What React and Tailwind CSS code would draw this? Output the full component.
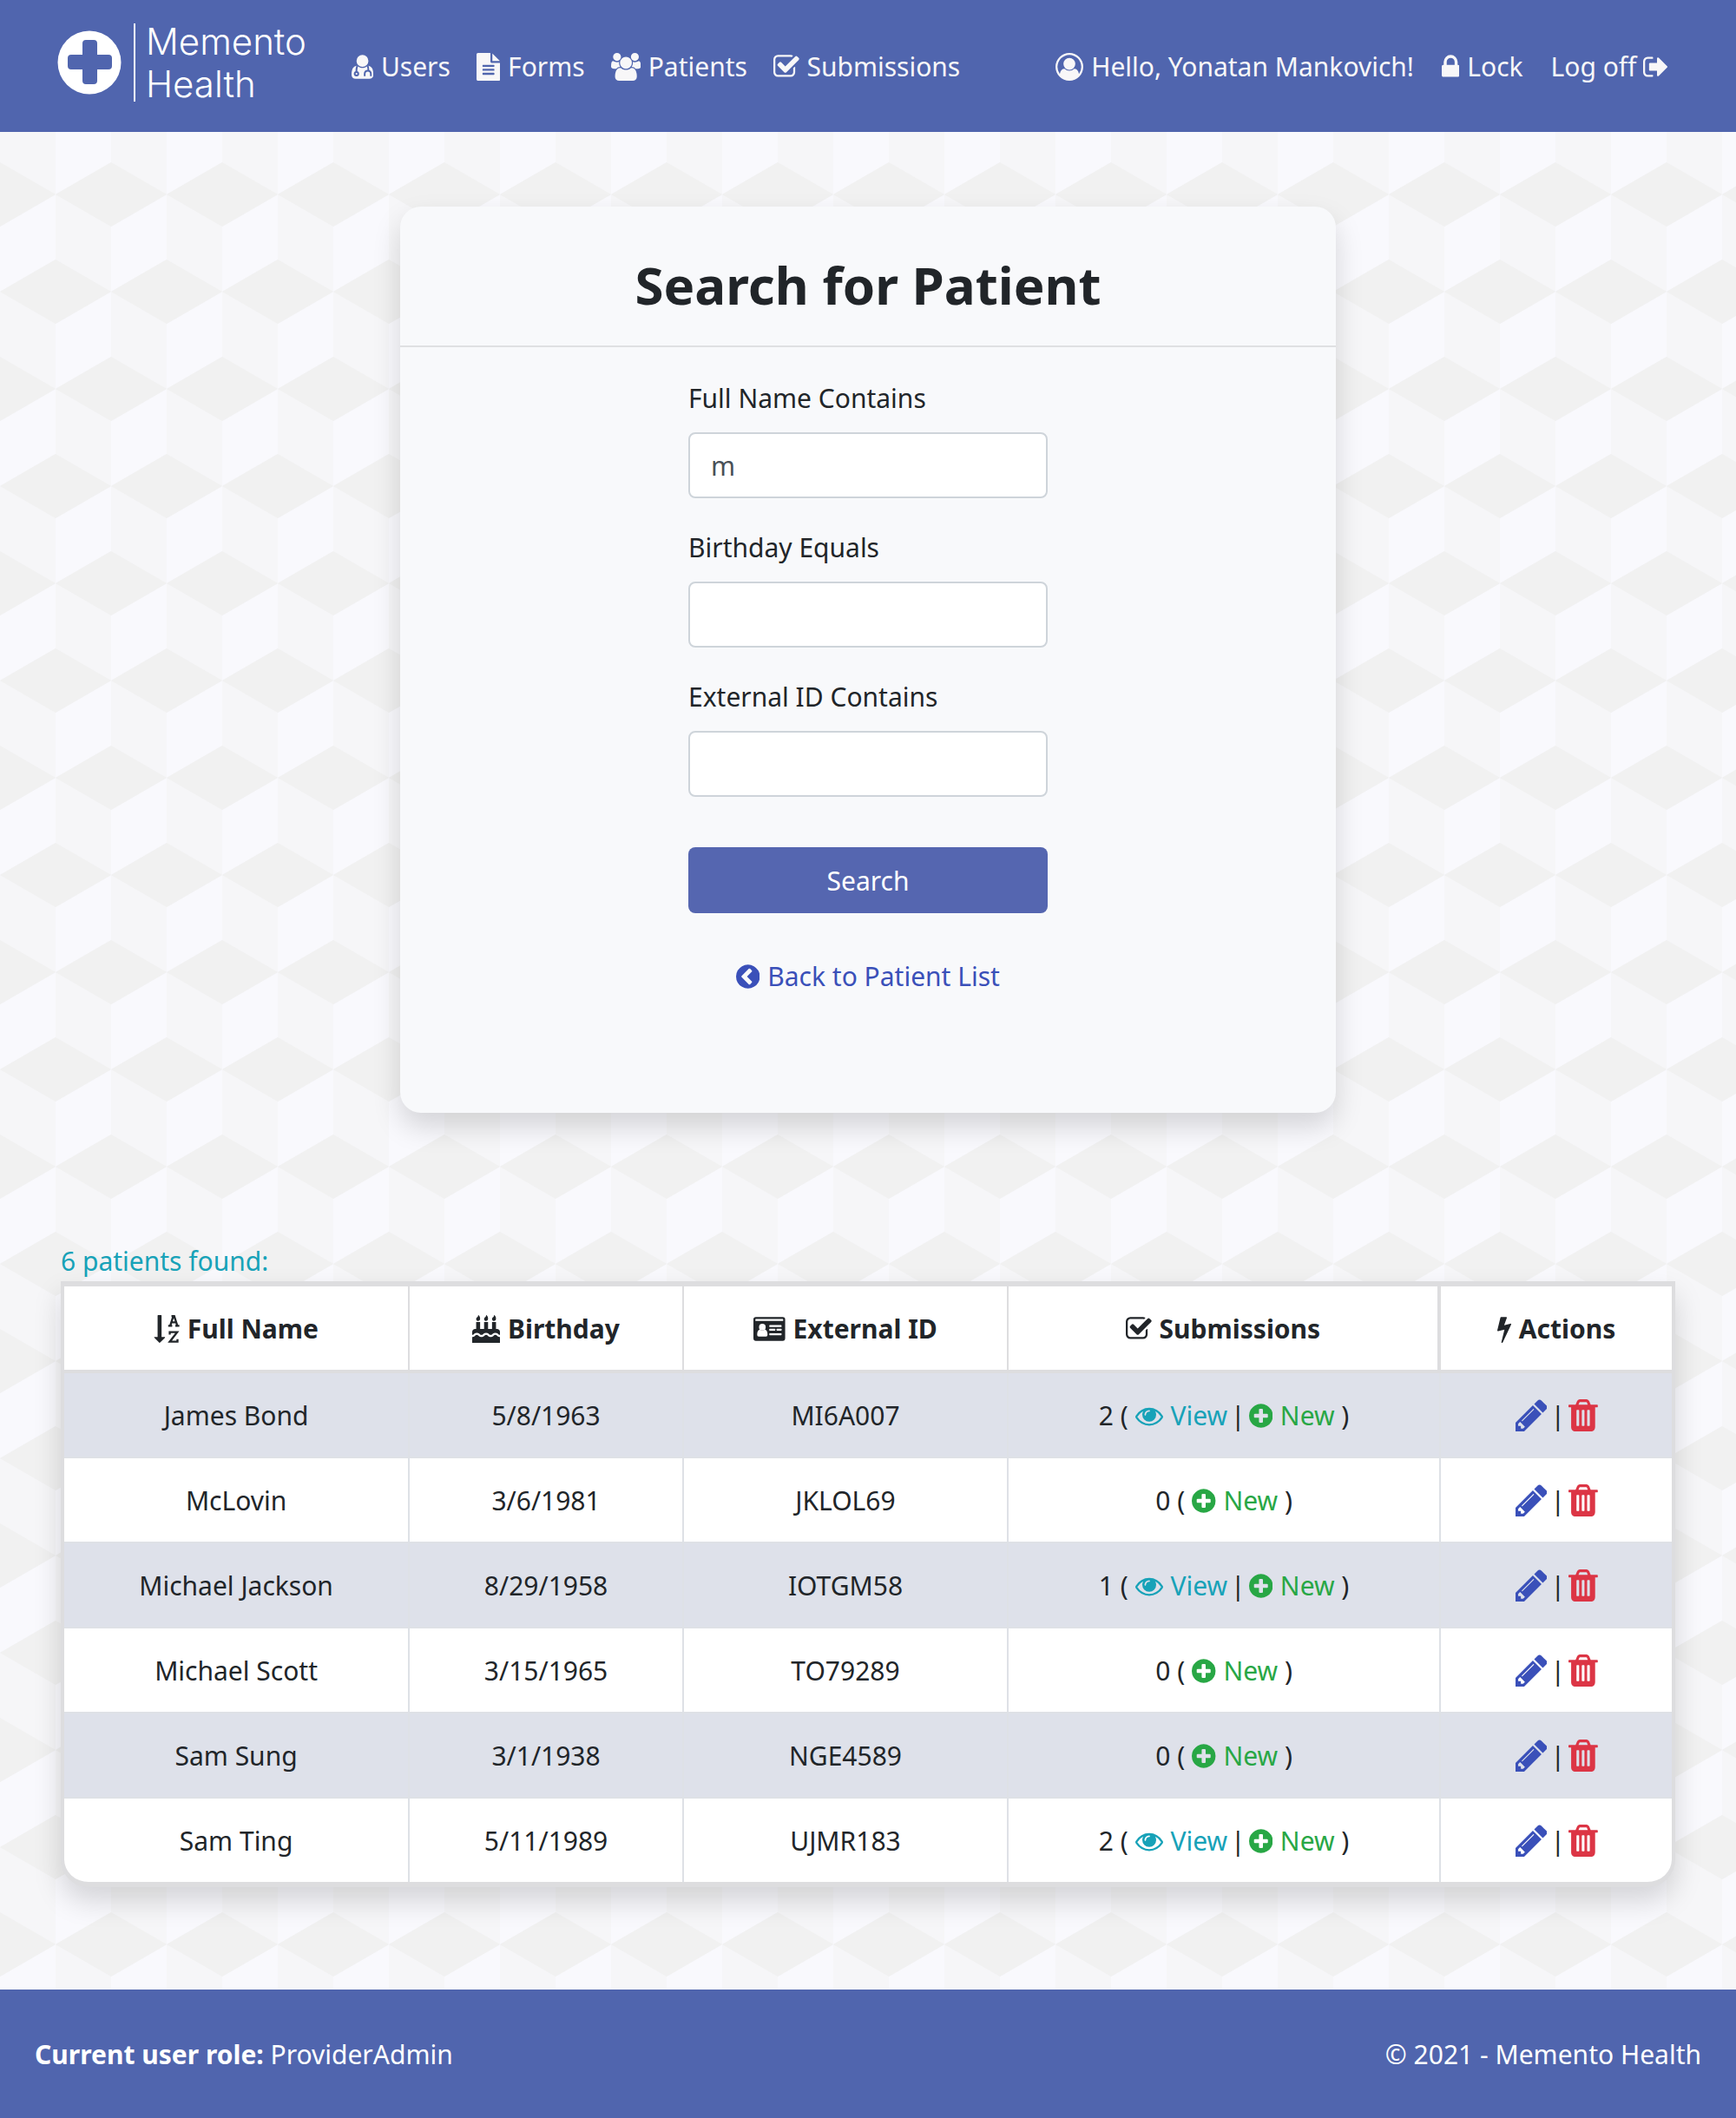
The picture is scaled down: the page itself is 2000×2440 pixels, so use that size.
const CIRCLE =
  "m627 -499q0 209-103 385.5t-279.5 279.5-385.5 103-385.5-103-279.5-279.5-103-385.5 103-385.5 279.5-279.5 385.5-103 385.5 103 279.5 279.5 103 385.5z";
const FLAME =
  "q0 77-36 118.5t-92 41.5q-53 0-90.5-37.5t-37.5-90.5q0-29 9.5-51t23.5-34 31-28 31-31.5 23.5-44.5 9.5-67q38 0 83 74t45 150z";
const TRASH_BAR = "v-704q0-14-9-23t-23-9h-64q-14 0-23 9t-9 23v704q0 14 9 23t23 9h64q14 0 23-9t9-23z";
const TEXT_LINE = "v-64q0-14-9-23t-23-9h-704q-14 0-23 9t-9 23v64q0 14 9 23t23 9h704q14 0 23-9t9-23z";

function Icon({ box, d, children, className = "mr-px h-8 align-[-5px]" }) {
  return (
    <svg viewBox={box} fill="currentColor" aria-hidden="true" className={"inline-block w-auto " + className}>
      {d ? <path d={d} /> : children}
    </svg>
  );
}

const UserMd = () => (
  <Icon box="192 0 1408 1792">
    <path d="M1600 1405q0 120-73 189.5t-194 69.5h-874q-121 0-194-69.5t-73-189.5q0-53 3.5-103.5t14-109 26.5-108.5 43-97.5 62-81 85.5-53.5 111.5-20q9 0 42 21.5t74.5 48 108 48 133.5 21.5 133.5-21.5 108-48 74.5-48 42-21.5q61 0 111.5 20t85.5 53.5 62 81 43 97.5 26.5 108.5 14 109 3.5 103.5zm-320-893q0 159-112.5 271.5t-271.5 112.5-271.5-112.5-112.5-271.5 112.5-271.5 271.5-112.5 271.5 112.5 112.5 271.5z" />
    <g fill="none" stroke="#5065ae" strokeWidth="110">
      <path d="M560 840q-56 130-56 390" />
      <circle cx="512" cy="1344" r="116" />
      <path d="M1240 840q36 120 40 300" />
      <path d="M1040 1500v-140q0-210 200-210t200 210v140" />
    </g>
  </Icon>
);
const FileText = () => (
  <Icon
    box="128 0 1536 1792"
    d={
      "M1596 476q14 14 28 36h-472v-472q22 14 36 28zm-476 164h544v1056q0 40-28 68t-68 28h-1344q-40 0-68-28t-28-68v-1600q0-40 28-68t68-28h800v544q0 40 28 68t68 28zm160 736" +
      TEXT_LINE + "m0-256" + TEXT_LINE + "m0-256" + TEXT_LINE
    }
  />
);
const Users = () => (
  <Icon
    box="0 0 1920 1792"
    d="M593 896q-162 5-265 128h-134q-82 0-138-40.5t-56-118.5q0-353 124-353 6 0 43.5 21t97.5 42.5 119 21.5q67 0 133-23-5 37-5 66 0 139 81 256zm1071 637q0 120-73 189.5t-194 69.5h-874q-121 0-194-69.5t-73-189.5q0-53 3.5-103.5t14-109 26.5-108.5 43-97.5 62-81 85.5-53.5 111.5-20q10 0 43 21.5t73 48 107 48 135 21.5 135-21.5 107-48 73-48 43-21.5q61 0 111.5 20t85.5 53.5 62 81 43 97.5 26.5 108.5 14 109 3.5 103.5zm-1024-1277q0 106-75 181t-181 75-181-75-75-181 75-181 181-75 181 75 75 181zm704 384q0 159-112.5 271.5t-271.5 112.5-271.5-112.5-112.5-271.5 112.5-271.5 271.5-112.5 271.5 112.5 112.5 271.5zm576 225q0 78-56 118.5t-138 40.5h-134q-103-123-265-128 81-117 81-256 0-29-5-66 66 23 133 23 59 0 119-21.5t97.5-42.5 43.5-21q124 0 124 353zm-128-609q0 106-75 181t-181 75-181-75-75-181 75-181 181-75 181 75 75 181z"
  />
);
const CheckSquare = () => (
  <Icon
    box="64 0 1664 1792"
    d="M1472 930v318q0 119-84.5 203.5t-203.5 84.5h-832q-119 0-203.5-84.5t-84.5-203.5v-832q0-119 84.5-203.5t203.5-84.5h832q63 0 117 25 15 7 18 23 3 17-9 29l-49 49q-10 10-23 10-3 0-9-2-23-6-45-6h-832q-66 0-113 47t-47 113v832q0 66 47 113t113 47h832q66 0 113-47t47-113v-254q0-13 9-22l64-64q10-10 23-10 6 0 12 3 20 8 20 29zm231-489l-814 814q-24 24-57 24t-57-24l-430-430q-24-24-24-57t24-57l110-110q24-24 57-24t57 24l263 263 647-647q24-24 57-24t57 24l110 110q24 24 24 57t-24 57z"
  />
);
const UserCircle = () => (
  <Icon
    box="0 0 1792 1792"
    d="M896 0q182 0 348 71t286 191 191 286 71 348q0 181-70.5 347t-190.5 286-286 191.5-349 71.5-349-71-285.5-191.5-190.5-286-71-347.5 71-348 191-286 286-191 348-71zm619 1351q149-205 149-455 0-156-61-298t-164-245-245-164-298-61-298 61-245 164-164 245-61 298q0 250 149 455 66-327 306-327 131 128 313 128t313-128q240 0 306 327zm-235-647q0-159-112.5-271.5t-271.5-112.5-271.5 112.5-112.5 271.5 112.5 271.5 271.5 112.5 271.5-112.5 112.5-271.5z"
  />
);
const Lock = () => (
  <Icon
    box="320 0 1152 1792"
    d="M640 768h512v-192q0-106-75-181t-181-75-181 75-75 181v192zm832 96v576q0 40-28 68t-68 28h-960q-40 0-68-28t-28-68v-576q0-40 28-68t68-28h32v-192q0-184 132-316t316-132 316 132 132 316v192h32q40 0 68 28t28 68z"
  />
);
const SignOut = () => (
  <Icon
    box="64 0 1664 1792"
    d="M704 1440q0 4 1 20t.5 26.5-3 23.5-10 19.5-20.5 6.5h-320q-119 0-203.5-84.5t-84.5-203.5v-704q0-119 84.5-203.5t203.5-84.5h320q13 0 22.5 9.5t9.5 22.5q0 4 1 20t.5 26.5-3 23.5-10 19.5-20.5 6.5h-320q-66 0-113 47t-47 113v704q0 66 47 113t113 47h312l11.5 1 11.5 3 8 5.5 7 9 2 13.5zm928-544q0 26-19 45l-544 544q-19 19-45 19t-45-19-19-45v-288h-448q-26 0-45-19t-19-45v-384q0-26 19-45t45-19h448v-288q0-26 19-45t45-19 45 19l544 544q19 19 19 45z"
  />
);
const ChevronCircle = () => (
  <Icon
    box="128 0 1536 1792"
    d={
      "M1037 1395l102-102q19-19 19-45t-19-45l-307-307 307-307q19-19 19-45t-19-45l-102-102q-19-19-45-19t-45 19l-454 454q-19 19-19 45t19 45l454 454q19 19 45 19t45-19z" +
      CIRCLE
    }
  />
);
const PlusCircle = () => (
  <Icon
    box="128 0 1536 1792"
    d="M1344 960v-128q0-26-19-45t-45-19h-256v-256q0-26-19-45t-45-19h-128q-26 0-45 19t-19 45v256h-256q-26 0-45 19t-19 45v128q0 26 19 45t45 19h256v256q0 26 19 45t45 19h128q26 0 45-19t19-45v-256h256q26 0 45-19t19-45zm320-64q0 209-103 385.5t-279.5 279.5-385.5 103-385.5-103-279.5-279.5-103-385.5 103-385.5 279.5-279.5 385.5-103 385.5 103 279.5 279.5 103 385.5z"
  />
);
const Eye = () => (
  <Icon
    box="0 0 1792 1792"
    d="M1664 960q-152-236-381-353 61 104 61 225 0 185-131.5 316.5t-316.5 131.5-316.5-131.5-131.5-316.5q0-121 61-225-229 117-381 353 133 205 333.5 326.5t434.5 121.5 434.5-121.5 333.5-326.5zm-720-384q0-20-14-34t-34-14q-125 0-214.5 89.5t-89.5 214.5q0 20 14 34t34 14 34-14 14-34q0-86 61-147t147-61q20 0 34-14t14-34zm848 384q0 34-20 69-140 230-376.5 368.5t-499.5 138.5-499.5-139-376.5-368q-20-35-20-69t20-69q140-229 376.5-368t499.5-139 499.5 139 376.5 368q20 35 20 69z"
  />
);
const Bolt = () => (
  <Icon
    box="448 0 896 1792"
    d="M1333 566q18 20 7 44l-540 1157q-13 25-42 25-4 0-14-2-17-5-25.5-19t-4.5-30l197-808-406 101q-4 1-12 1-18 0-31-11-18-15-13-39l201-825q4-14 16-23t28-9h328q19 0 32 12.5t13 29.5q0 8-5 18l-171 463 396-98q8-2 12-2 19 0 34 15z"
  />
);
const Cake = () => (
  <Icon
    box="0 0 1792 1792"
    d={
      "M1792 1408v384h-1792v-384q45 0 85-14t59-27.5 47-37.5q30-27 51.5-38t56.5-11q24 0 44 7t31 15 33 27q29 25 47 38t58 27 86 14q45 0 85-14.5t58-27 48-37.5q21-19 32.5-27t31-15 43.5-7q35 0 56.5 11t51.5 38q28 24 47 37.5t59 27.5 85 14 85-14 59-27.5 47-37.5q30-27 51.5-38t56.5-11q34 0 55.5 11t51.5 38q28 24 47 37.5t59 27.5 85 14zm0-320v192q-24 0-44-7t-31-15-33-27q-29-25-47-38t-58-27-85-14q-46 0-86 14t-58 27-47 38q-22 19-33 27t-31 15-44 7q-35 0-56.5-11t-51.5-38q-29-25-47-38t-58-27-86-14q-45 0-85 14.5t-58 27-48 37.5q-21 19-32.5 27t-31 15-43.5 7q-35 0-56.5-11t-51.5-38q-28-24-47-37.5t-59-27.5-85-14q-46 0-86 14t-58 27-47 38q-22 19-33 27t-31 15-44 7v-192q0-80 56-136t136-56h64v-448h256v448h256v-448h256v448h256v-448h256v448h64q80 0 136 56t56 136zM512 224" +
      FLAME + "M1024 224" + FLAME + "M1536 224" + FLAME
    }
  />
);
const IdCard = () => (
  <Icon box="0 0 2048 1792">
    <rect y="128" width="2048" height="1536" rx="160" />
    <g fill="#fff">
      <rect x="128" y="256" width="1792" height="128" rx="24" />
      <circle cx="576" cy="780" r="215" />
      <path d="M240 1270q0-300 180-330 156 110 312 0 180 30 180 330 0 118-100 118h-472q-100 0-100-118z" />
      <rect x="1024" y="640" width="792" height="128" rx="32" />
      <rect x="1024" y="884" width="384" height="128" rx="32" />
      <rect x="1496" y="884" width="320" height="128" rx="32" />
      <rect x="1024" y="1170" width="792" height="128" rx="32" />
    </g>
  </Icon>
);
const SortAlpha = () => (
  <Icon box="0 0 1664 1792">
    <path d="M736 1440q0 12-10 24l-319 319q-10 9-23 9-12 0-23-9l-320-320q-15-16-7-35 8-20 30-20h192v-1376q0-14 9-23t23-9h192q14 0 23 9t9 23v1376h192q14 0 23 9t9 23z" />
    <g fill="none" stroke="currentColor" strokeWidth="130">
      <path d="M940 690h260M1400 690h260M1070 690l200-620h60l200 620M1130 470h340M1150 65h170" />
      <path d="M1040 1260v-160h480l-480 620h500v-170" />
    </g>
  </Icon>
);
const Pencil = () => (
  <Icon
    box="128 0 1536 1792"
    className="h-[43px] align-[-10px]"
    d="M491 1536l91-91-235-235-91 91v107h128v128h107zm523-928q0-22-22-22-10 0-17 7l-542 542q-7 7-7 17 0 22 22 22 10 0 17-7l542-542q7-7 7-17zm-54-192l416 416-832 832h-416v-416zm683 96q0 53-37 90l-166 166-416-416 166-165q36-38 90-38 53 0 91 38l235 234q37 39 37 91z"
  />
);
const Trash = () => (
  <Icon
    box="192 0 1408 1792"
    className="h-[43px] align-[-10px]"
    d={
      "M704 1376" + TRASH_BAR + "m256 0" + TRASH_BAR + "m256 0" + TRASH_BAR +
      "m-544-992h448l-48-117q-7-9-17-11h-317q-10 2-17 11zm928 32v64q0 14-9 23t-23 9h-96v948q0 83-47 143.5t-113 60.5h-832q-66 0-113-58.5t-47-141.5v-952h-96q-14 0-23-9t-9-23v-64q0-14 9-23t23-9h309l70-167q15-37 54-63t79-26h320q40 0 79 26t54 63l70 167h309q14 0 23 9t9 23z"
    }
  />
);

const Divider = () => <span className="px-1">|</span>;

function CubeBackdrop() {
  return (
    <svg aria-hidden="true" className="absolute inset-0 size-full">
      <defs>
        <pattern id="cubes" width="128" height="224" patternUnits="userSpaceOnUse" patternTransform="translate(0 72)">
          <rect width="128" height="224" fill="#f6f6f8" />
          <path fill="#f9f9fd" d="M0 37L64 0V75L0 112zM64 149L128 112V187L64 224z" />
          <path
            fill="#f1f1f1"
            d="M0 -37L64 0L0 37zM128 -37V37L64 0zM0 187L64 224H0zM128 187V224H64zM0 112L64 75L128 112L64 149z"
          />
        </pattern>
      </defs>
      <rect width="100%" height="100%" fill="url(#cubes)" />
    </svg>
  );
}

function Header() {
  return (
    <header className="flex h-[152px] items-center bg-[#5065ae] pr-[76px] pl-[66px] text-[#f8f7f8]">
      <a href="#home" className="mr-[52px] flex items-center gap-3 pb-2 text-white">
        <svg viewBox="0 0 90 90" aria-hidden="true" className="h-[90px] w-[90px]">
          <circle cx="37" cy="45" r="36.5" fill="#fff" />
          <path
            fill="#5065ae"
            d="M33 19h9q4 0 4 4v13h13q4 0 4 4v9q0 4-4 4h-13v13q0 4-4 4h-9q-4 0-4-4v-13h-13q-4 0-4-4v-9q0-4 4-4h13v-13q0-4 4-4z"
          />
          <path stroke="#fff" strokeWidth="2" d="M89 0v90" />
        </svg>
        <span className="font-['Inter'] text-[42px] leading-[49px] font-light">
          Memento
          <br />
          Health
        </span>
      </a>
      <nav className="flex flex-1 justify-between pt-0.5 whitespace-nowrap">
        <div className="flex gap-[30px]">
          <a href="#users"><UserMd /> Users</a>
          <a href="#forms"><FileText /> Forms</a>
          <a href="#patients"><Users /> Patients</a>
          <a href="#submissions"><CheckSquare /> Submissions</a>
        </div>
        <div className="flex gap-8">
          <a href="#account"><UserCircle /> Hello, Yonatan Mankovich!</a>
          <a href="#lock"><Lock /> Lock</a>
          <a href="#logoff">Log off <SignOut /></a>
        </div>
      </nav>
    </header>
  );
}

function Field({ id, label, value }) {
  return (
    <div className="mb-[33px]">
      <label htmlFor={id} className="mb-[15px] block">{label}</label>
      <input
        id={id}
        type="text"
        defaultValue={value}
        className="block h-[76px] w-full rounded-lg border-2 border-[#ced4da] bg-white px-6 text-[#495057]"
      />
    </div>
  );
}

function SearchCard() {
  return (
    <section className="mx-auto mt-[86px] h-[1044px] w-full max-w-[1078px] rounded-3xl bg-[#f8f9fb] shadow-[0_16px_32px_rgba(0,0,0,0.15)]">
      <h1 className="border-b-2 border-[#dfe0e2] pt-[46px] pb-[26px] text-center text-[60px] leading-[88px] font-bold">
        Search for Patient
      </h1>
      <form className="mx-auto mt-[35px] w-full max-w-[414px]">
        <Field id="name" label="Full Name Contains" value="m" />
        <Field id="birthday" label="Birthday Equals" value="" />
        <Field id="external" label="External ID Contains" value="" />
        <button type="button" className="mt-[25px] h-[76px] w-full rounded-lg bg-[#5566b0] pt-0.5 text-white">
          Search
        </button>
        <p className="mt-[49px] text-center whitespace-nowrap">
          <a href="#list" className="text-[#3a50b9]"><ChevronCircle /> Back to Patient List</a>
        </p>
      </form>
    </section>
  );
}

const PATIENTS = [
  ["James Bond", "5/8/1963", "MI6A007", 2],
  ["McLovin", "3/6/1981", "JKLOL69", 0],
  ["Michael Jackson", "8/29/1958", "IOTGM58", 1],
  ["Michael Scott", "3/15/1965", "TO79289", 0],
  ["Sam Sung", "3/1/1938", "NGE4589", 0],
  ["Sam Ting", "5/11/1989", "UJMR183", 2],
];

function PatientTable() {
  return (
    <div className="overflow-hidden rounded-b-[32px] border-x-4 border-y-[6px] border-[#dddddf] bg-white shadow-[0_16px_32px_rgba(0,0,0,0.15)]">
      <table className="w-full table-fixed border-separate border-spacing-0 text-center whitespace-nowrap [&_td]:border-[#dee1e6] [&_td]:pt-0.5 [&_th]:border-[#dddddf] [&_th]:pt-0.5">
        <colgroup>
          <col className="w-[21.5%]" />
          <col className="w-[17.05%]" />
          <col className="w-[20.2%]" />
          <col className="w-[26.9%]" />
          <col />
        </colgroup>
        <thead>
          <tr className="h-[100px] [&>th]:border-b-4 [&>th]:font-bold">
            <th className="border-r-2"><SortAlpha /> Full Name</th>
            <th className="border-r-2"><Cake /> Birthday</th>
            <th className="border-r-2"><IdCard /> External ID</th>
            <th className="border-r-4"><CheckSquare /> Submissions</th>
            <th><Bolt /> Actions</th>
          </tr>
        </thead>
        <tbody>
          {PATIENTS.map(([name, birthday, id, count]) => (
            <tr
              key={id}
              className="h-[98px] odd:bg-[#dee1ea] last:h-24 [&:not(:last-child)>td]:border-b-2 [&>td:not(:last-child)]:border-r-2"
            >
              <td>{name}</td>
              <td>{birthday}</td>
              <td>{id}</td>
              <td>
                {count} ({" "}
                {count > 0 && (
                  <>
                    <a href="#view" className="text-[#17a2b8]"><Eye /> View</a>
                    <Divider />
                  </>
                )}
                <a href="#new" className="text-[#28a745]"><PlusCircle /> New</a> )
              </td>
              <td>
                <a href="#edit" aria-label={"Edit " + name} className="text-[#3a50b9]"><Pencil /></a>
                <Divider />
                <a href="#delete" aria-label={"Delete " + name} className="text-[#dc3545]"><Trash /></a>
              </td>
            </tr>
          ))}
        </tbody>
      </table>
    </div>
  );
}

export default function App() {
  return (
    <div className="flex min-h-screen flex-col font-['Noto_Sans',sans-serif] text-[30px] leading-[48px] text-[#212529]">
      <Header />
      <main className="relative flex-1 px-[70px] pb-[118px]">
        <CubeBackdrop />
        <div className="relative flow-root">
          <SearchCard />
          <p className="mt-[147px] leading-[47px] text-[#17a2b8]">6 patients found:</p>
          <PatientTable />
        </div>
      </main>
      <footer className="flex h-[148px] items-center justify-between bg-[#5065ae] px-10 pt-0.5 text-white">
        <p><strong>Current user role:</strong> ProviderAdmin</p>
        <p>© 2021 - Memento Health</p>
      </footer>
    </div>
  );
}
